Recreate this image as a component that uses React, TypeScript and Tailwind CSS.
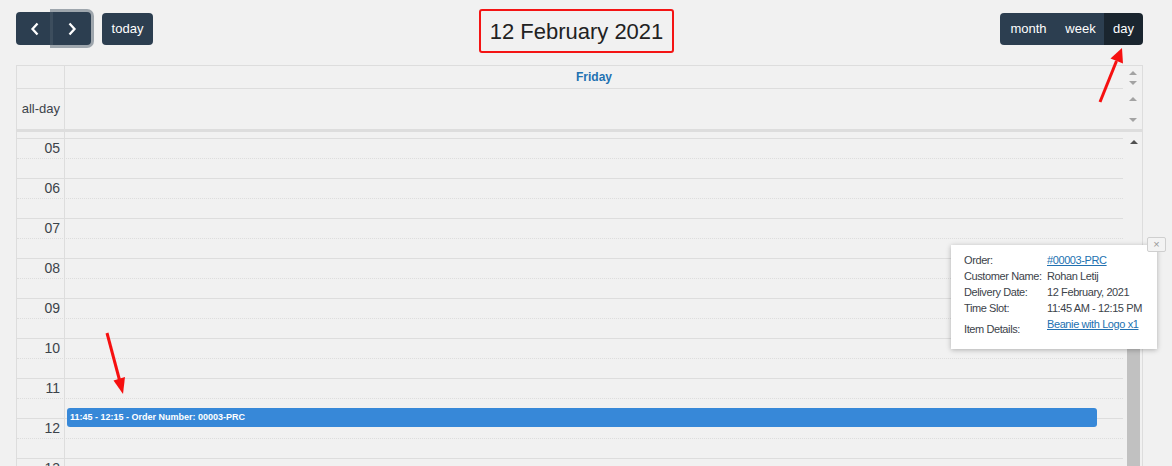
import React from "react";

const hours = ["05", "06", "07", "08", "09", "10", "11", "12", "13"];

const details = [
  { label: "Order:", value: "#00003-PRC", link: true },
  { label: "Customer Name:", value: "Rohan Letij" },
  { label: "Delivery Date:", value: "12 February, 2021" },
  { label: "Time Slot:", value: "11:45 AM - 12:15 PM" },
];

function Tri({ up, color }: { up?: boolean; color: string }) {
  return (
    <svg width="8" height="4" viewBox="0 0 8 4" className="block">
      <polygon points={up ? "0,4 4,0 8,4" : "0,0 8,0 4,4"} fill={color} />
    </svg>
  );
}

function Chevron({ dir }: { dir: "left" | "right" }) {
  return (
    <svg width="10" height="14" viewBox="0 0 10 14" fill="none" stroke="white" strokeWidth="2.3">
      <polyline points={dir === "left" ? "7.5,1.5 2.5,7 7.5,12.5" : "2.5,1.5 7.5,7 2.5,12.5"} />
    </svg>
  );
}

function Toolbar() {
  return (
    <div className="flex h-[65px] items-start justify-between pl-4 pr-[29px] pt-3">
      <div className="flex items-start">
        <div className="flex">
          <button className="flex h-[33px] w-[37px] items-center justify-center rounded-l-[4px] bg-[#2c3e50]">
            <Chevron dir="left" />
          </button>
          <button className="relative z-10 flex h-[33px] w-[38px] items-center justify-center rounded-r-[4px] bg-[#2c3e50] shadow-[0_0_0_3px_rgba(76,91,106,0.5)]">
            <Chevron dir="right" />
          </button>
        </div>
        <button className="ml-[11px] mt-px h-[32px] w-[51px] rounded-[4px] bg-[#2c3e50] text-[13px] text-white">
          today
        </button>
      </div>
      <div className="-mt-[3px] flex h-[44px] w-[195px] items-center justify-center rounded-[3px] border-2 border-[#f41414] text-[22px] text-[#222]">
        12 February 2021
      </div>
      <div className="mt-px flex h-[32px] overflow-hidden rounded-[4px] text-[13px] text-white">
        <div className="flex w-[57px] items-center justify-center bg-[#2c3e50]">month</div>
        <div className="flex w-[47px] items-center justify-center bg-[#2c3e50]">week</div>
        <div className="flex w-[39px] items-center justify-center bg-[#1a252f]">day</div>
      </div>
    </div>
  );
}

function TimeGrid() {
  return (
    <div className="flex">
      <div className="relative flex-1">
        <div className="flex h-[6px]">
          <div className="w-[48px] border-r border-[#ddd]" />
        </div>
        {hours.map((h) => (
          <div key={h}>
            <div className="flex h-[20px] border-t border-[#ddd]">
              <div className="w-[48px] border-r border-[#ddd] pr-[4px] text-right text-[14px] leading-[19px] text-[#3c434a]">
                {h}
              </div>
            </div>
            <div className="flex h-[20px] border-t border-dotted border-[#ddd]">
              <div className="w-[48px] border-r border-[#ddd]" />
            </div>
          </div>
        ))}
        <div className="absolute left-[50px] right-[26px] top-[276px] h-[19px] rounded-[3px] bg-[#3788d8] pl-[3px] text-[9px] font-bold leading-[19px] text-white">
          11:45 - 12:15 - Order Number: 00003-PRC
        </div>
      </div>
      <div className="flex w-[19px] flex-col pl-[4px] pt-[8px]">
        <div className="flex w-[13px] justify-center">
          <Tri up color="#505050" />
        </div>
        <div className="mt-[156px] h-[200px] w-[13px] bg-[#c1c1c1]" />
      </div>
    </div>
  );
}

function Popover() {
  return (
    <>
      <div className="absolute left-[951px] top-[245px] w-[206px] bg-white px-[13px] py-[7px] text-[11px] tracking-[-0.4px] text-[#3c434a] shadow-[0_1px_5px_rgba(0,0,0,0.28)]">
        <div className="grid grid-cols-[83px_1fr] leading-[16px]">
          {details.map((d) => (
            <React.Fragment key={d.label}>
              <div>{d.label}</div>
              <div className={d.link ? "text-[#2271b1] underline" : ""}>{d.value}</div>
            </React.Fragment>
          ))}
          <div className="flex h-[26px] items-center">Item Details:</div>
          <div className="text-[#2271b1] underline">Beanie with Logo x1</div>
        </div>
      </div>
      <div className="absolute left-[1147px] top-[237px] flex h-[15px] w-[19px] items-center justify-center rounded-[2px] border border-[#cfcfcf] bg-[#f3f3f3] text-[11px] leading-none text-[#9a9a9a]">
        ×
      </div>
    </>
  );
}

export default function App() {
  return (
    <div className="relative h-[466px] w-[1172px] overflow-hidden bg-[#f1f1f1] font-['Liberation_Sans',Arial,sans-serif]">
      <Toolbar />
      <div className="ml-4 w-[1127px] border border-[#ddd]">
        <div className="flex">
          <div className="flex h-[23px] flex-1 border-b border-[#ddd]">
            <div className="w-[48px] border-r border-[#ddd]" />
            <div className="flex-1 text-center text-[12px] font-bold leading-[22px] text-[#2271b1]">Friday</div>
          </div>
          <div className="flex w-[19px] flex-col items-center gap-[6px] pt-[5px]">
            <Tri up color="#a3a3a3" />
            <Tri color="#a3a3a3" />
          </div>
        </div>
        <div className="flex h-[40px]">
          <div className="flex flex-1">
            <div className="flex w-[48px] items-center justify-end border-r border-[#ddd] pr-[4px] text-[13px] text-[#3c434a]">
              all-day
            </div>
          </div>
          <div className="flex w-[19px] flex-col items-center justify-between pb-[7px] pt-[8px]">
            <Tri up color="#a3a3a3" />
            <Tri color="#a3a3a3" />
          </div>
        </div>
        <div className="h-[3px] bg-[#ddd]" />
        <TimeGrid />
      </div>
      <Popover />
      <svg className="pointer-events-none absolute inset-0" width="1172" height="466">
        <line x1="1100" y1="102" x2="1116.5" y2="61" stroke="#f61010" strokeWidth="3" />
        <polygon points="1122,48 1123,63.5 1110.5,58.5" fill="#f61010" />
        <line x1="107" y1="333" x2="119.5" y2="380" stroke="#f61010" strokeWidth="3" />
        <polygon points="123,394 125,377 113.5,380.5" fill="#f61010" />
      </svg>
    </div>
  );
}
